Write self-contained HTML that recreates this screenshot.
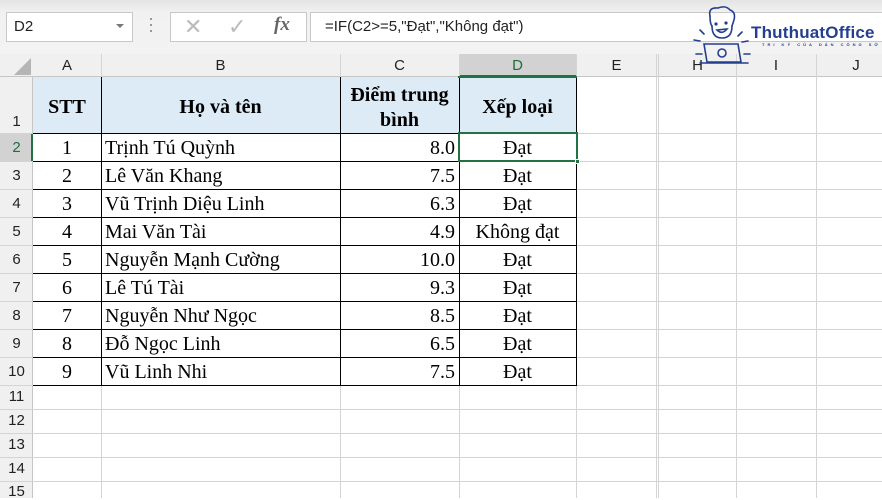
<!DOCTYPE html>
<html><head><meta charset="utf-8"><style>
*{margin:0;padding:0;box-sizing:border-box}
body{width:882px;height:498px;overflow:hidden;background:#fff;position:relative;font-family:"Liberation Serif",serif}
.a{position:absolute}
.ui{font-family:"Liberation Sans","DejaVu Sans",sans-serif}
.hl{position:absolute;height:1px;background:#d4d4d4}
.vl{position:absolute;width:1px;background:#d4d4d4}
.bh{position:absolute;height:1px;background:#000}
.bv{position:absolute;width:1px;background:#000}
.ch{position:absolute;top:54px;height:23px;font:15px "Liberation Sans",sans-serif;color:#222;text-align:center;line-height:24px}
.rh{position:absolute;left:0;width:33px;font:15px "Liberation Sans",sans-serif;color:#222;text-align:center}
.t{position:absolute;font-size:20px;color:#000;white-space:nowrap}
</style></head><body>
<div class="a" style="left:0;top:0;width:882px;height:54px;background:linear-gradient(#e4e4e4,#f1f1f1 12px,#f3f3f3)"></div>
<div class="a ui" style="left:6px;top:12px;width:127px;height:30px;background:#fff;border:1px solid #c8c8c8;font-size:15px;line-height:28px;padding-left:7px;color:#222">D2</div>
<div class="a" style="left:116px;top:24px;width:0;height:0;border-left:4px solid transparent;border-right:4px solid transparent;border-top:4px solid #777"></div>
<div class="a" style="left:150px;top:18px;width:2px;height:2px;background:#999;box-shadow:0 6px #999,0 12px #999"></div>
<div class="a" style="left:170px;top:12px;width:137px;height:30px;background:#fff;border:1px solid #c8c8c8"></div>
<div class="a ui" style="left:184px;top:14px;font-size:22px;color:#bbb">✕</div>
<div class="a ui" style="left:228px;top:14px;font-size:22px;color:#bbb">✓</div>
<div class="a" style="left:274px;top:14px;font:italic bold 19px 'Liberation Serif',serif;color:#666">fx</div>
<div class="a ui" style="left:310px;top:12px;width:580px;height:30px;background:#fff;border:1px solid #c8c8c8;font-size:15px;line-height:28px;padding-left:14px;color:#222">=IF(C2&gt;=5,"Đạt","Không đạt")</div>
<div class="a" style="left:0;top:54px;width:882px;height:23px;background:#f0f0f0;border-bottom:1px solid #c6c6c6"></div>
<div class="a" style="left:459px;top:54px;width:117px;height:23px;background:#d2d2d2;border-bottom:2px solid #217346"></div>
<div class="a" style="left:14px;top:58px;width:0;height:0;border-left:17px solid transparent;border-bottom:17px solid #b5b5b5"></div>
<div class="ch" style="left:33px;width:68px">A</div>
<div class="ch" style="left:101px;width:239px">B</div>
<div class="ch" style="left:340px;width:119px">C</div>
<div class="ch" style="left:459px;width:117px;color:#1e6e3e">D</div>
<div class="ch" style="left:576px;width:81px">E</div>
<div class="ch" style="left:659px;width:77px">H</div>
<div class="ch" style="left:736px;width:80px">I</div>
<div class="ch" style="left:816px;width:80px">J</div>
<div class="a" style="left:0;top:77px;width:33px;height:421px;background:#f0f0f0;border-right:1px solid #c6c6c6"></div>
<div class="a" style="left:0;top:133px;width:33px;height:28px;background:#d2d2d2;border-right:2px solid #217346"></div>
<div class="vl" style="left:101px;top:54px;height:444px"></div>
<div class="vl" style="left:340px;top:54px;height:444px"></div>
<div class="vl" style="left:459px;top:54px;height:444px"></div>
<div class="vl" style="left:576px;top:54px;height:444px"></div>
<div class="vl" style="left:656px;top:54px;height:444px"></div>
<div class="vl" style="left:658px;top:54px;height:444px"></div>
<div class="vl" style="left:736px;top:54px;height:444px"></div>
<div class="vl" style="left:816px;top:54px;height:444px"></div>
<div class="hl" style="left:0;top:133px;width:882px"></div>
<div class="hl" style="left:0;top:161px;width:882px"></div>
<div class="hl" style="left:0;top:189px;width:882px"></div>
<div class="hl" style="left:0;top:217px;width:882px"></div>
<div class="hl" style="left:0;top:245px;width:882px"></div>
<div class="hl" style="left:0;top:273px;width:882px"></div>
<div class="hl" style="left:0;top:301px;width:882px"></div>
<div class="hl" style="left:0;top:329px;width:882px"></div>
<div class="hl" style="left:0;top:357px;width:882px"></div>
<div class="hl" style="left:0;top:385px;width:882px"></div>
<div class="hl" style="left:0;top:409px;width:882px"></div>
<div class="hl" style="left:0;top:433px;width:882px"></div>
<div class="hl" style="left:0;top:457px;width:882px"></div>
<div class="hl" style="left:0;top:481px;width:882px"></div>
<div class="a" style="left:33px;top:77px;width:543px;height:56px;background:#ddebf7"></div>
<div class="bh" style="left:33px;top:133px;width:544px"></div>
<div class="bh" style="left:33px;top:161px;width:544px"></div>
<div class="bh" style="left:33px;top:189px;width:544px"></div>
<div class="bh" style="left:33px;top:217px;width:544px"></div>
<div class="bh" style="left:33px;top:245px;width:544px"></div>
<div class="bh" style="left:33px;top:273px;width:544px"></div>
<div class="bh" style="left:33px;top:301px;width:544px"></div>
<div class="bh" style="left:33px;top:329px;width:544px"></div>
<div class="bh" style="left:33px;top:357px;width:544px"></div>
<div class="bh" style="left:33px;top:385px;width:544px"></div>
<div class="bv" style="left:101px;top:77px;height:308px"></div>
<div class="bv" style="left:340px;top:77px;height:308px"></div>
<div class="bv" style="left:459px;top:77px;height:308px"></div>
<div class="bv" style="left:576px;top:77px;height:308px"></div>
<div class="a" style="left:458px;top:76px;width:119px;height:2px;background:#217346"></div>
<div class="a" style="left:458px;top:132px;width:120px;height:30px;border:2px solid #217346"></div>
<div class="a" style="left:575px;top:159px;width:5px;height:5px;background:#217346;border:1px solid #fff"></div>
<div class="rh" style="top:113px">1</div>
<div class="rh" style="top:139px;color:#1e6e3e">2</div>
<div class="rh" style="top:167px">3</div>
<div class="rh" style="top:195px">4</div>
<div class="rh" style="top:223px">5</div>
<div class="rh" style="top:251px">6</div>
<div class="rh" style="top:279px">7</div>
<div class="rh" style="top:307px">8</div>
<div class="rh" style="top:335px">9</div>
<div class="rh" style="top:363px">10</div>
<div class="rh" style="top:388px">11</div>
<div class="rh" style="top:412px">12</div>
<div class="rh" style="top:436px">13</div>
<div class="rh" style="top:460px">14</div>
<div class="rh" style="top:483px">15</div>
<div class="t" style="left:33px;width:68px;top:96px;text-align:center;font-weight:bold">STT</div>
<div class="t" style="left:101px;width:239px;top:96px;text-align:center;font-weight:bold">Họ và tên</div>
<div class="t" style="left:340px;width:119px;top:83px;text-align:center;font-weight:bold;line-height:25px">Điểm trung<br>bình</div>
<div class="t" style="left:459px;width:117px;top:96px;text-align:center;font-weight:bold">Xếp loại</div>
<div class="a" style="left:0;top:137px">
<div class="t" style="left:33px;width:68px;top:0;text-align:center">1</div><div class="t" style="left:105px;top:0">Trịnh Tú Quỳnh</div><div class="t" style="left:340px;width:115px;top:0;text-align:right">8.0</div><div class="t" style="left:459px;width:117px;top:0;text-align:center">Đạt</div>
<div class="t" style="left:33px;width:68px;top:28px;text-align:center">2</div><div class="t" style="left:105px;top:28px">Lê Văn Khang</div><div class="t" style="left:340px;width:115px;top:28px;text-align:right">7.5</div><div class="t" style="left:459px;width:117px;top:28px;text-align:center">Đạt</div>
<div class="t" style="left:33px;width:68px;top:56px;text-align:center">3</div><div class="t" style="left:105px;top:56px">Vũ Trịnh Diệu Linh</div><div class="t" style="left:340px;width:115px;top:56px;text-align:right">6.3</div><div class="t" style="left:459px;width:117px;top:56px;text-align:center">Đạt</div>
<div class="t" style="left:33px;width:68px;top:84px;text-align:center">4</div><div class="t" style="left:105px;top:84px">Mai Văn Tài</div><div class="t" style="left:340px;width:115px;top:84px;text-align:right">4.9</div><div class="t" style="left:459px;width:117px;top:84px;text-align:center">Không đạt</div>
<div class="t" style="left:33px;width:68px;top:112px;text-align:center">5</div><div class="t" style="left:105px;top:112px">Nguyễn Mạnh Cường</div><div class="t" style="left:340px;width:115px;top:112px;text-align:right">10.0</div><div class="t" style="left:459px;width:117px;top:112px;text-align:center">Đạt</div>
<div class="t" style="left:33px;width:68px;top:140px;text-align:center">6</div><div class="t" style="left:105px;top:140px">Lê Tú Tài</div><div class="t" style="left:340px;width:115px;top:140px;text-align:right">9.3</div><div class="t" style="left:459px;width:117px;top:140px;text-align:center">Đạt</div>
<div class="t" style="left:33px;width:68px;top:168px;text-align:center">7</div><div class="t" style="left:105px;top:168px">Nguyễn Như Ngọc</div><div class="t" style="left:340px;width:115px;top:168px;text-align:right">8.5</div><div class="t" style="left:459px;width:117px;top:168px;text-align:center">Đạt</div>
<div class="t" style="left:33px;width:68px;top:196px;text-align:center">8</div><div class="t" style="left:105px;top:196px">Đỗ Ngọc Linh</div><div class="t" style="left:340px;width:115px;top:196px;text-align:right">6.5</div><div class="t" style="left:459px;width:117px;top:196px;text-align:center">Đạt</div>
<div class="t" style="left:33px;width:68px;top:224px;text-align:center">9</div><div class="t" style="left:105px;top:224px">Vũ Linh Nhi</div><div class="t" style="left:340px;width:115px;top:224px;text-align:right">7.5</div><div class="t" style="left:459px;width:117px;top:224px;text-align:center">Đạt</div>
</div>
<svg class="a" style="left:690px;top:4px" width="62" height="62" viewBox="0 0 62 62" fill="none" stroke="#243f8f" stroke-width="1.6" stroke-linecap="round">
<path d="M20 12 Q18 3 28 4 Q36 1 40 6 Q46 8 44 16 L42 22"/>
<path d="M20 12 Q20 20 22 22"/>
<path d="M22 22 Q22 34 32 34 Q42 34 42 22"/>
<circle cx="26" cy="20" r="0.8" fill="#243f8f"/><circle cx="36" cy="19" r="0.8" fill="#243f8f"/>
<path d="M27 26 Q32 31 37 25 Z"/>
<path d="M14 40 L48 40 L51 58 L17 58 Z"/>
<circle cx="32" cy="49" r="4"/>
<path d="M10 59 L58 59"/>
<path d="M10 26 L14 30 M4 36 L10 37 M6 50 L12 50 M52 28 L48 32 M58 37 L52 38 M54 50 L60 50"/>
</svg>
<div class="a ui" style="left:751px;top:23px;font-size:17px;font-weight:bold;color:#243f8f;letter-spacing:0.2px">ThuthuatOffice</div>
<div class="a ui" style="left:762px;top:42px;font-size:4px;font-weight:bold;color:#243f8f;letter-spacing:3px;white-space:nowrap">TRI KỶ CỦA DÂN CÔNG SỞ</div>
</body></html>
